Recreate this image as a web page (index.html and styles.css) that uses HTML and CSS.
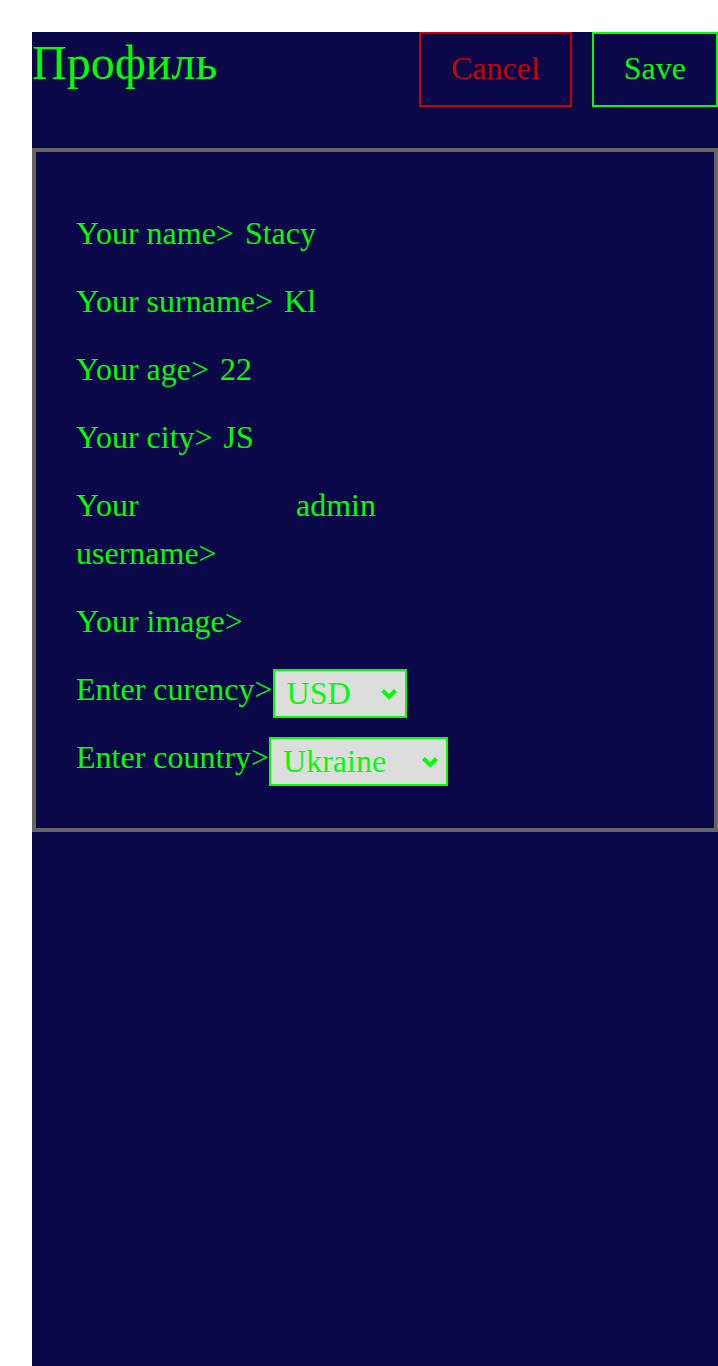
FILE: index.html
```html
<!DOCTYPE html>
<html lang="ru">
<head>
<meta charset="utf-8">
<title>Профиль</title>
<link rel="stylesheet" href="styles.css">
</head>
<body>
<div class="page">
  <header class="header">
    <h1 class="title">Профиль</h1>
    <div class="actions">
      <button class="btn btn-cancel" type="button">Cancel</button>
      <button class="btn btn-save" type="button">Save</button>
    </div>
  </header>
  <section class="panel">
    <div class="row"><span class="label">Your name&gt;</span><span class="value">Stacy</span></div>
    <div class="row"><span class="label">Your surname&gt;</span><span class="value">Kl</span></div>
    <div class="row"><span class="label">Your age&gt;</span><span class="value">22</span></div>
    <div class="row"><span class="label">Your city&gt;</span><span class="value">JS</span></div>
    <div class="row"><span class="label">Your username&gt;</span><span class="value">admin</span></div>
    <div class="row"><span class="label">Your image&gt;</span></div>
    <div class="row row-select">
      <span class="label">Enter curency&gt;</span>
      <span class="select-wrap">
        <select class="select select-currency">
          <option>USD</option>
          <option>EUR</option>
          <option>UAH</option>
        </select>
        <svg class="chevron" width="18" height="12" viewBox="0 0 18 12" aria-hidden="true"><path d="M2.5 2.5 L9 9 L15.5 2.5" fill="none" stroke="#00ff00" stroke-width="4"/></svg>
      </span>
    </div>
    <div class="row row-select">
      <span class="label">Enter country&gt;</span>
      <span class="select-wrap">
        <select class="select select-country">
          <option>Ukraine</option>
          <option>Poland</option>
          <option>USA</option>
        </select>
        <svg class="chevron" width="18" height="12" viewBox="0 0 18 12" aria-hidden="true"><path d="M2.5 2.5 L9 9 L15.5 2.5" fill="none" stroke="#00ff00" stroke-width="4"/></svg>
      </span>
    </div>
  </section>
</div>
</body>
</html>
```

FILE: styles.css
```css
html, body {
  margin: 0;
  background: #ffffff;
}

body {
  padding: 32px 0 0 32px;
  font-family: "Liberation Serif", "Times New Roman", serif;
  overflow: hidden;
}

.page {
  background: #0a0848;
  color: #00ff00;
  min-height: calc(100vh - 32px);
}

.header {
  display: flex;
  justify-content: space-between;
  align-items: flex-start;
  margin-bottom: 41px;
}

.title {
  margin: 0;
  padding-top: 3px;
  font-size: 48px;
  font-weight: normal;
  line-height: normal;
  color: #00ff00;
}

.actions {
  display: flex;
  gap: 20px;
}

.btn {
  font-family: "Liberation Serif", "Times New Roman", serif;
  font-size: 32px;
  line-height: 37px;
  padding: 16px 30px 18px;
  background: transparent;
  border: 2px solid;
  border-radius: 0;
  cursor: pointer;
}

.btn-cancel {
  color: #cc0000;
  border-color: #cc0000;
}

.btn-save {
  color: #00ff00;
  border-color: #00ff00;
}

.panel {
  border: 4px solid #666666;
  padding: 57px 40px 42px;
  display: flex;
  flex-direction: column;
  gap: 20px;
  font-size: 32px;
  line-height: 48px;
}

.row {
  display: flex;
  align-items: baseline;
}

.row-select {
  align-items: flex-start;
}

.row-select + .row-select {
  margin-top: -5px;
}

.label {
  flex: 0 1 auto;
}

.value {
  flex: 0 0 378px;
  margin-left: 11px;
}

.select-wrap {
  position: relative;
  display: inline-flex;
  margin-top: 4px;
}

.select {
  appearance: none;
  -webkit-appearance: none;
  font-family: "Liberation Serif", "Times New Roman", serif;
  font-size: 32px;
  line-height: 37px;
  color: #00ff00;
  background-color: #dddddd;
  border: 2px solid #00ff00;
  border-radius: 0;
  box-sizing: border-box;
  height: 49px;
  padding: 4px 0 4px 12px;
  margin: 0;
}

.select-currency {
  width: 134px;
}

.select-country {
  width: 179px;
}

.chevron {
  position: absolute;
  right: 9px;
  top: 19px;
  pointer-events: none;
}
```
